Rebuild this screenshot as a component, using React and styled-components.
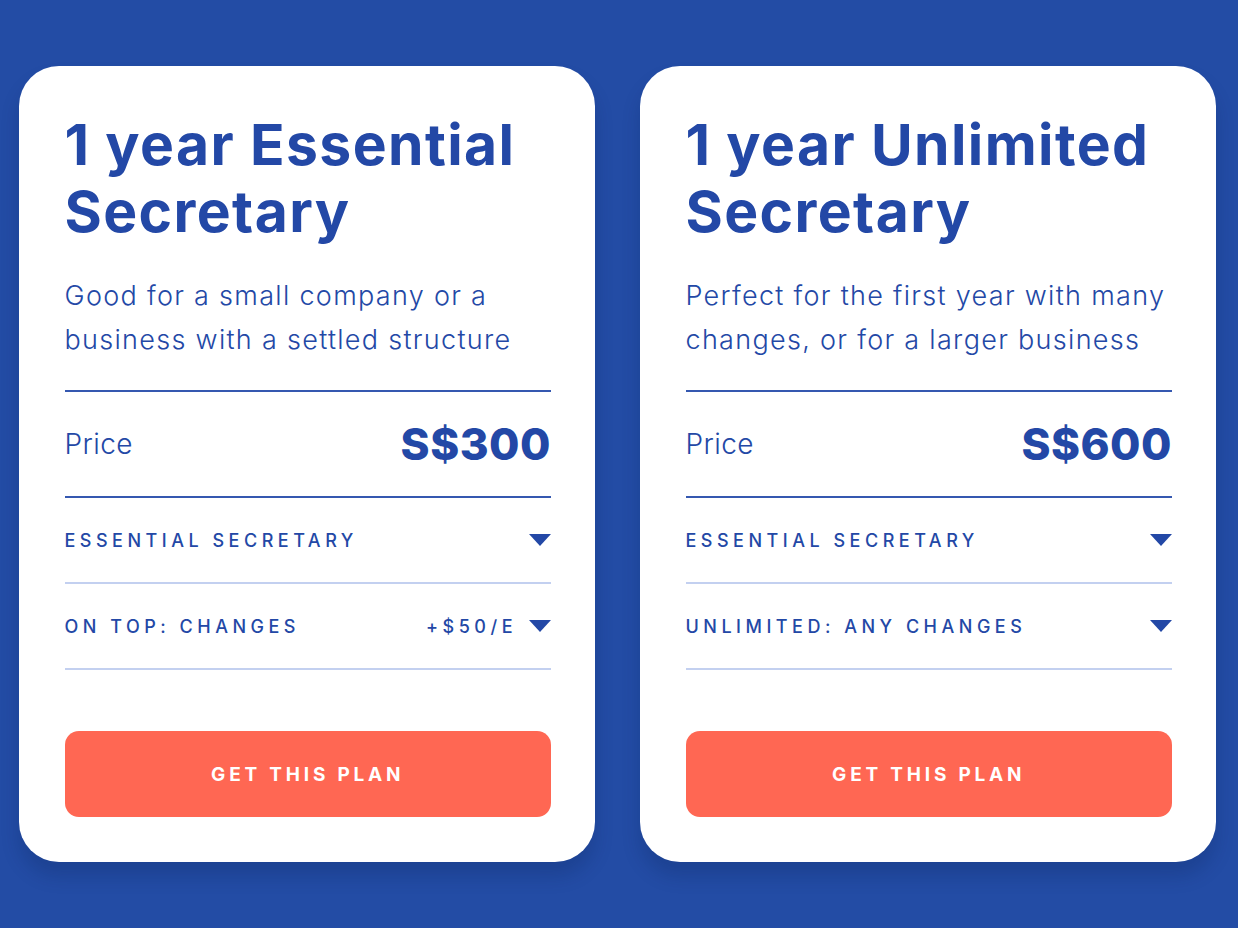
import styled, { createGlobalStyle } from 'styled-components';

const GlobalStyle = createGlobalStyle`
  html, body {
    margin: 0;
    padding: 0;
    background: #234ca5;
  }
  * { box-sizing: border-box; }
`;

const Page = styled.div`
  width: 1238px;
  height: 928px;
  background: #234ca5;
  display: flex;
  gap: 45px;
  padding: 66px 22px 0 19px;
  font-family: Inter, "Noto Sans", sans-serif;
  color: #2348a6;
`;

const Card = styled.div`
  width: 576px;
  height: 796px;
  background: #fff;
  border-radius: 40px;
  padding: 45px 44px 45px 45.5px;
  display: flex;
  flex-direction: column;
  box-shadow: 0 14px 18px rgba(10, 30, 80, 0.22);
`;

const Title = styled.h2`
  margin: 0;
  font-size: 57px;
  line-height: 67px;
  font-weight: 700;
  letter-spacing: 1.4px;
`;

const Desc = styled.p`
  margin: 29px 0 0;
  font-size: 27px;
  line-height: 44px;
  font-weight: 300;
  letter-spacing: 1.3px;
  padding-bottom: 28px;
  border-bottom: 2px solid #3558b0;
`;

const PriceRow = styled.div`
  height: 106px;
  display: flex;
  align-items: center;
  justify-content: space-between;
  border-bottom: 2px solid #3558b0;
`;

const PriceLabel = styled.span`
  font-size: 28px;
  font-weight: 300;
  letter-spacing: 0.4px;
`;

const PriceValue = styled.span`
  font-size: 44px;
  font-weight: 800;
  letter-spacing: 0.5px;
`;

const Option = styled.div`
  height: 86px;
  display: flex;
  align-items: center;
  justify-content: space-between;
  border-bottom: 2px solid #c3d0f0;
  font-size: 18px;
  font-weight: 500;
  letter-spacing: 4.5px;
  text-transform: uppercase;
`;

const OptionRight = styled.span`
  display: flex;
  align-items: center;
  gap: 12px;
`;

const Arrow = styled.svg`
  width: 22px;
  height: 12px;
  fill: #2348a6;
`;

const Button = styled.button`
  margin-top: auto;
  height: 86px;
  width: 100%;
  border: none;
  border-radius: 14px;
  background: #ff6753;
  color: #fff;
  font-family: Inter, "Noto Sans", sans-serif;
  font-size: 19px;
  font-weight: 700;
  letter-spacing: 3.8px;
  text-transform: uppercase;
  cursor: pointer;
`;

const plans = [
  {
    title: ['1 year Essential', 'Secretary'],
    desc: ['Good for a small company or a', 'business with a settled structure'],
    price: 'S$300',
    options: [
      { label: 'Essential secretary' },
      { label: 'On top: changes', extra: '+$50/E' },
    ],
  },
  {
    title: ['1 year Unlimited', 'Secretary'],
    desc: ['Perfect for the first year with many', 'changes, or for a larger business'],
    price: 'S$600',
    options: [
      { label: 'Essential secretary' },
      { label: 'Unlimited: any changes' },
    ],
  },
];

function Caret() {
  return (
    <Arrow viewBox="0 0 22 12">
      <path d="M0 0 H22 L11 12 Z" />
    </Arrow>
  );
}

export default function App() {
  return (
    <>
      <GlobalStyle />
      <Page>
        {plans.map((p) => (
          <Card key={p.price}>
            <Title>
              {p.title[0]}
              <br />
              {p.title[1]}
            </Title>
            <Desc>
              {p.desc[0]}
              <br />
              {p.desc[1]}
            </Desc>
            <PriceRow>
              <PriceLabel>Price</PriceLabel>
              <PriceValue>{p.price}</PriceValue>
            </PriceRow>
            {p.options.map((o) => (
              <Option key={o.label}>
                <span>{o.label}</span>
                <OptionRight>
                  {o.extra}
                  <Caret />
                </OptionRight>
              </Option>
            ))}
            <Button>Get this plan</Button>
          </Card>
        ))}
      </Page>
    </>
  );
}
